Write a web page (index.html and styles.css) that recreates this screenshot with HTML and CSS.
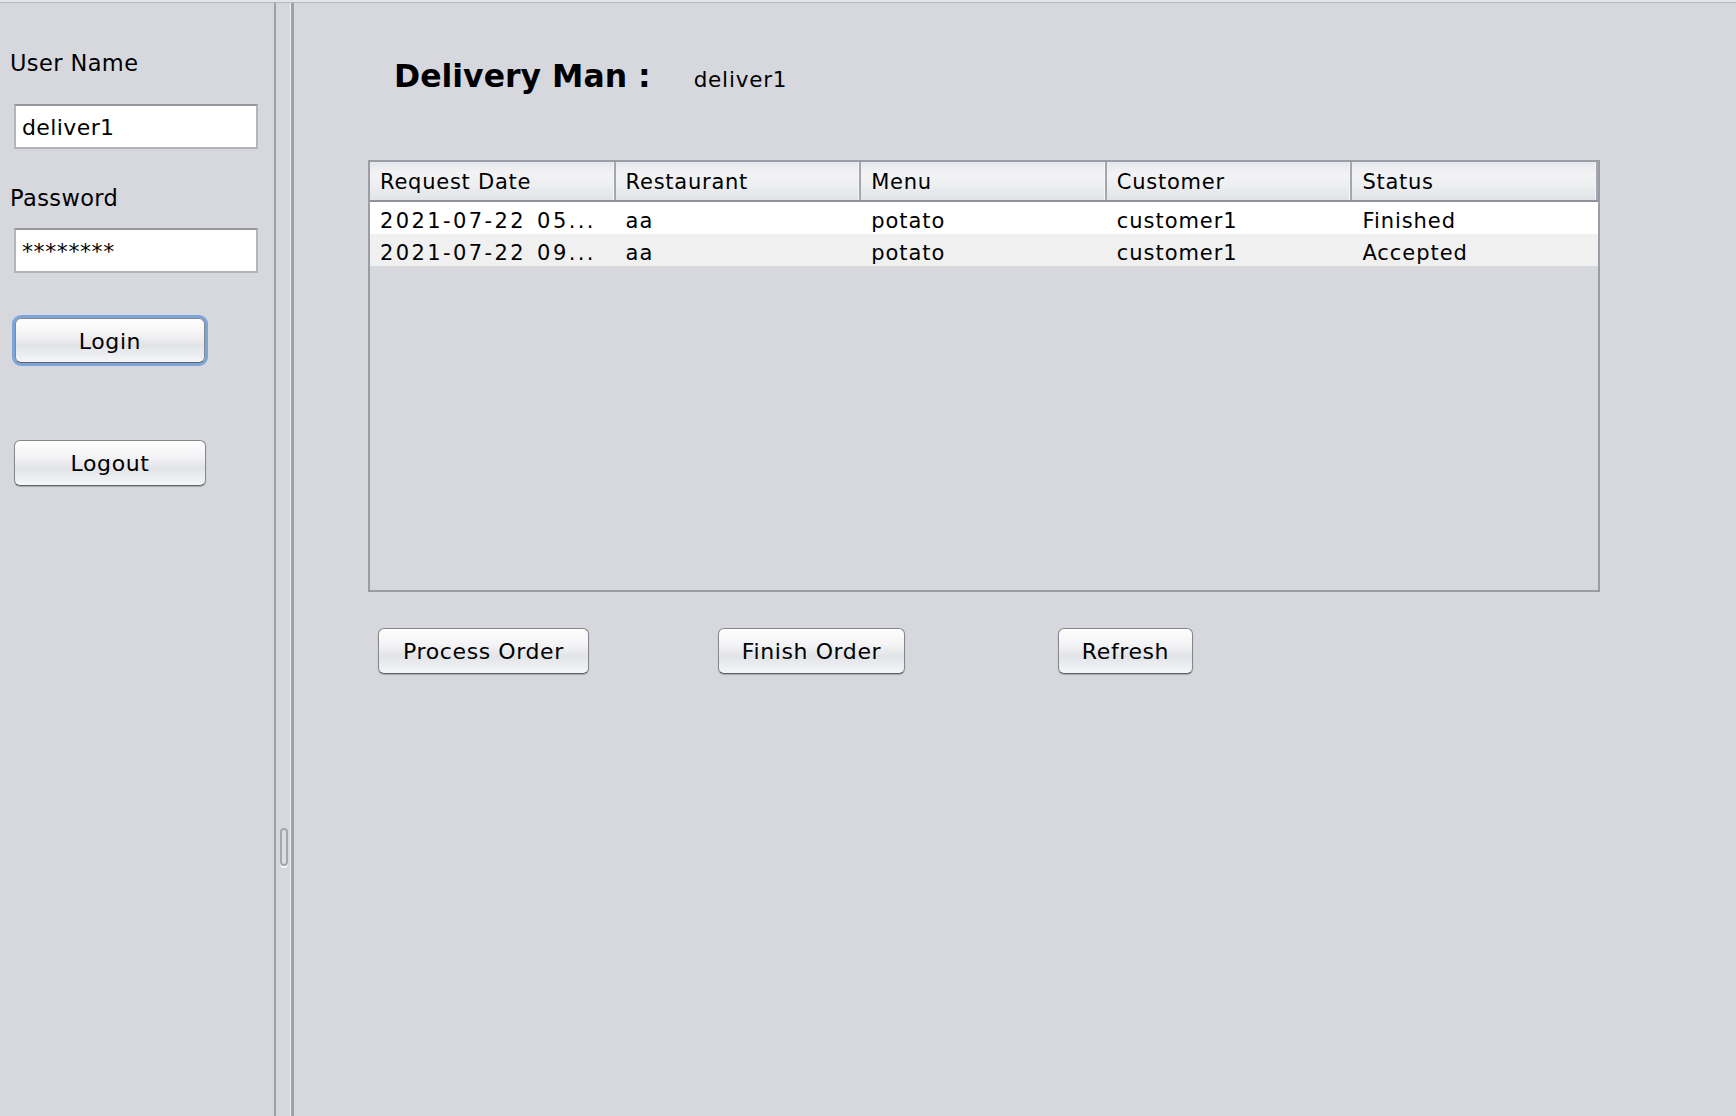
FILE: index.html
```html
<!DOCTYPE html>
<html>
<head>
<meta charset="utf-8">
<link rel="stylesheet" href="styles.css">
</head>
<body>
<div class="topline"></div>
<div class="app">
  <aside class="left">
    <div class="label label-user">User Name</div>
    <div class="field field-user">deliver1</div>
    <div class="label label-pass">Password</div>
    <div class="field field-pass">********</div>
    <div class="btn btn-login">Login</div>
    <div class="btn btn-logout">Logout</div>
  </aside>
  <div class="splitter"><div class="grip"></div></div>
  <main class="main">
    <div class="heading">
      <span class="title">Delivery Man :</span>
      <span class="who">deliver1</span>
    </div>
    <div class="table">
      <div class="thead">
        <div class="th">Request Date</div>
        <div class="th">Restaurant</div>
        <div class="th">Menu</div>
        <div class="th">Customer</div>
        <div class="th">Status</div>
      </div>
      <div class="tr odd">
        <div class="td date">2021-07-22 05...</div>
        <div class="td">aa</div>
        <div class="td">potato</div>
        <div class="td">customer1</div>
        <div class="td">Finished</div>
      </div>
      <div class="tr even">
        <div class="td date">2021-07-22 09...</div>
        <div class="td">aa</div>
        <div class="td">potato</div>
        <div class="td">customer1</div>
        <div class="td">Accepted</div>
      </div>
    </div>
    <div class="actions">
      <div class="btn btn-process">Process Order</div>
      <div class="btn btn-finish">Finish Order</div>
      <div class="btn btn-refresh">Refresh</div>
    </div>
  </main>
</div>
</body>
</html>
```

FILE: styles.css
```css
html, body {
  margin: 0;
  padding: 0;
  background: #d6d8de;
  font-family: "DejaVu Sans", "Liberation Sans", sans-serif;
  color: #000;
  overflow: hidden;
}

.topline {
  height: 2px;
  background: #e4e5e9;
  border-bottom: 1px solid #b5b7bd;
}

.app {
  display: flex;
  height: 1113px;
}

/* left panel */
.left {
  width: 274px;
  flex: none;
  box-sizing: border-box;
  padding-left: 10px;
  display: flex;
  flex-direction: column;
  align-items: flex-start;
}

.label {
  font-size: 22.5px;
  line-height: 26px;
  height: 26px;
  letter-spacing: 0.4px;
}
.label-user { margin-top: 47px; }
.label-pass { margin-top: 36px; }

.field {
  box-sizing: border-box;
  width: 244px;
  height: 45px;
  margin-left: 4px;
  background: #fff;
  border: 2px solid #b3b4b8;
  border-top-color: #96979c;
  padding: 4px 0 0 6px;
  font-size: 22px;
  line-height: 35px;
  letter-spacing: 0.4px;
  white-space: nowrap;
}
.field-user { margin-top: 28px; }
.field-pass { margin-top: 17px; letter-spacing: 0.6px; }

.btn {
  box-sizing: border-box;
  height: 46px;
  border: 1px solid #86878c;
  border-bottom-color: #5f6065;
  border-radius: 6px;
  background: linear-gradient(#fefefe 0%, #f4f4f6 35%, #e3e4e8 62%, #eceef1 85%, #f6f7f9 100%);
  box-shadow: 0 1px 1px rgba(0, 0, 0, 0.22);
  text-align: center;
  font-size: 22px;
  line-height: 42px;
  padding-top: 2px;
  letter-spacing: 0.6px;
  white-space: nowrap;
}

.btn-login {
  width: 190px;
  height: 45px;
  margin-left: 5px;
  margin-top: 45px;
  box-shadow: 0 0 0 3px #7aa6d9, 0 1px 1px rgba(0, 0, 0, 0.2);
  line-height: 41px;
}
.btn-logout {
  width: 192px;
  margin-left: 4px;
  margin-top: 77px;
}

/* splitter */
.splitter {
  width: 20px;
  flex: none;
  box-sizing: border-box;
  border-left: 2px solid #9ea1aa;
  border-right: 3px solid #9ea1aa;
  box-shadow: inset -1px 0 0 #eff0f3;
  display: flex;
  flex-direction: column;
  align-items: flex-start;
}
.grip {
  margin-top: 825px;
  margin-left: 4px;
  width: 8px;
  height: 38px;
  box-sizing: border-box;
  border: 2px solid #a4a7ae;
  border-radius: 4px;
  background: #dcdee3;
  box-shadow: 0 2px 0 #f4f5f7;
}

/* main */
.main {
  flex: 1;
  padding-left: 74px;
  display: flex;
  flex-direction: column;
  align-items: flex-start;
}

.heading {
  margin-top: 53px;
  margin-left: 26px;
  display: flex;
  align-items: baseline;
  gap: 43px;
  height: 40px;
}
.title {
  font-weight: bold;
  font-size: 31.5px;
  line-height: 40px;
}
.who {
  font-size: 21.5px;
  letter-spacing: 0.8px;
}

.table {
  margin-top: 64px;
  width: 1232px;
  height: 432px;
  box-sizing: border-box;
  border: 2px solid #9a9da6;
  background: #d6d8de;
}

.thead, .tr {
  display: grid;
  grid-template-columns: repeat(5, 1fr);
}

.thead {
  height: 40px;
  box-sizing: border-box;
  border-bottom: 2px solid #8f929b;
  background: linear-gradient(#e6e7eb 0%, #f3f3f5 30%, #eeeff1 60%, #e1e2e6 100%);
}
.th {
  padding: 2px 0 0 10px;
  font-size: 21px;
  line-height: 36px;
  letter-spacing: 0.75px;
  border-right: 2px solid #a4a7af;
  box-shadow: inset -1px 0 0 #f6f6f8;
  white-space: nowrap;
}

.tr {
  height: 32px;
}
.tr.odd { background: #ffffff; }
.tr.even { background: #f0f0f0; }
.td {
  padding: 7px 0 0 10px;
  font-size: 21px;
  line-height: 25px;
  letter-spacing: 0.95px;
  white-space: nowrap;
}
.td.date {
  letter-spacing: 2.4px;
  word-spacing: 2px;
}

.actions {
  margin-top: 36px;
  margin-left: 10px;
  display: flex;
}
.btn-process { width: 211px; }
.btn-finish { width: 187px; margin-left: 129px; }
.btn-refresh { width: 135px; margin-left: 153px; }
```
